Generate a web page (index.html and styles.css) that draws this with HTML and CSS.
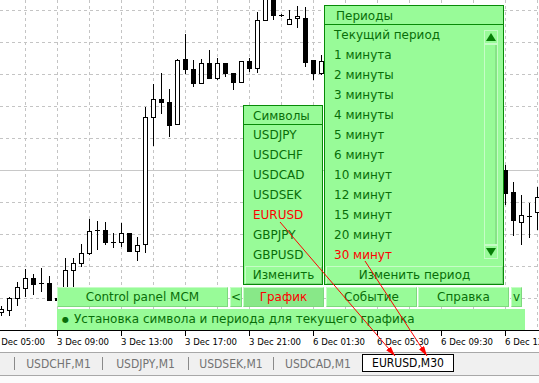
FILE: index.html
```html
<!DOCTYPE html>
<html lang="ru">
<head>
<meta charset="utf-8">
<title>MCM</title>
<link rel="stylesheet" href="styles.css">
</head>
<body>
<div class="screen">
  <div class="chart">
    <svg class="plot" width="539" height="331" viewBox="0 0 539 331">
      <path class="grid" d="M25.5 0V330M57.5 0V330M89.5 0V330M121.5 0V330M153.5 0V330M185.5 0V330M217.5 0V330M249.5 0V330M281.5 0V330M313.5 0V330M345.5 0V330M377.5 0V330M409.5 0V330M441.5 0V330M473.5 0V330M505.5 0V330M537.5 0V330M0 10.5H539M0 42.5H539M0 74.5H539M0 106.5H539M0 138.5H539M0 202.5H539M0 234.5H539M0 266.5H539M0 298.5H539"/>
      <path class="priceline" d="M0 170.5H539"/>
      <path class="wick" d="M1.5 306V316M9.5 297V316M17.5 282V306M25.5 269V297M33.5 274V295M41.5 268V292M49.5 276V301M57.5 292V305M65.5 258V305M73.5 258V290M81.5 244V267M89.5 219V255M97.5 221V250M105.5 222V245M113.5 233V248M121.5 223V247M129.5 233V251M137.5 237V261M145.5 107V253M153.5 84V146M161.5 73V114M169.5 89V137M177.5 59V125M185.5 34V74M193.5 60V87M201.5 59V83M209.5 50V78M217.5 58V80M225.5 63V77M233.5 73V90M241.5 61V82M249.5 58V72M257.5 12V73M265.5 -5V20M273.5 -5V20M281.5 14V17M289.5 10V25M297.5 6V28M305.5 7V67M313.5 60V80M321.5 55V75M505.5 165V205M513.5 182V236M521.5 195V245M529.5 203V238M537.5 187V230"/>
      <path class="wick" d="M39 283.5H44M95 230.5H100M111 242.5H116M279 15.5H284M527 216.5H532"/>
      <g class="bull">
        <rect x="-0.5" y="309.5" width="4" height="3"/>
        <rect x="7.5" y="298.5" width="4" height="12"/>
        <rect x="15.5" y="287.5" width="4" height="11"/>
        <rect x="23.5" y="278.5" width="4" height="10"/>
        <rect x="63.5" y="270.5" width="4" height="30"/>
        <rect x="71.5" y="263.5" width="4" height="7"/>
        <rect x="79.5" y="253.5" width="4" height="10"/>
        <rect x="87.5" y="231.5" width="4" height="22"/>
        <rect x="119.5" y="233.5" width="4" height="9"/>
        <rect x="135.5" y="245.5" width="4" height="6"/>
        <rect x="143.5" y="117.5" width="4" height="127"/>
        <rect x="151.5" y="99.5" width="4" height="18"/>
        <rect x="175.5" y="60.5" width="4" height="64"/>
        <rect x="199.5" y="63.5" width="4" height="20"/>
        <rect x="215.5" y="63.5" width="4" height="15"/>
        <rect x="239.5" y="61.5" width="4" height="21"/>
        <rect x="255.5" y="20.5" width="4" height="48"/>
        <rect x="263.5" y="-5.5" width="4" height="26"/>
        <rect x="287.5" y="19.5" width="4" height="5"/>
        <rect x="295.5" y="16.5" width="4" height="2"/>
        <rect x="319.5" y="61.5" width="4" height="12"/>
        <rect x="519.5" y="215.5" width="4" height="7"/>
        <rect x="535.5" y="197.5" width="4" height="15"/>
      </g>
      <g class="bear">
        <rect x="31.5" y="278.5" width="4" height="6"/>
        <rect x="47.5" y="283.5" width="4" height="17"/>
        <rect x="55.5" y="298.5" width="4" height="2"/>
        <rect x="103.5" y="230.5" width="4" height="12"/>
        <rect x="127.5" y="233.5" width="4" height="18"/>
        <rect x="159.5" y="99.5" width="4" height="3"/>
        <rect x="167.5" y="102.5" width="4" height="23"/>
        <rect x="183.5" y="59.5" width="4" height="10"/>
        <rect x="191.5" y="69.5" width="4" height="14"/>
        <rect x="207.5" y="63.5" width="4" height="15"/>
        <rect x="223.5" y="63.5" width="4" height="10"/>
        <rect x="231.5" y="73.5" width="4" height="9"/>
        <rect x="247.5" y="61.5" width="4" height="7"/>
        <rect x="271.5" y="-5.5" width="4" height="21"/>
        <rect x="303.5" y="18.5" width="4" height="44"/>
        <rect x="311.5" y="60.5" width="4" height="13"/>
        <rect x="503.5" y="170.5" width="4" height="23"/>
        <rect x="511.5" y="192.5" width="4" height="28"/>
      </g>
      <path class="axisline" d="M0 330.5H539"/>
    </svg>

    <div class="axis">
      <div class="tick-cell"><span class="tick"></span><span class="tick-label">3 Dec 05:00</span></div>
      <div class="tick-cell"><span class="tick"></span><span class="tick-label">3 Dec 09:00</span></div>
      <div class="tick-cell"><span class="tick"></span><span class="tick-label">3 Dec 13:00</span></div>
      <div class="tick-cell"><span class="tick"></span><span class="tick-label">3 Dec 17:00</span></div>
      <div class="tick-cell"><span class="tick"></span><span class="tick-label">3 Dec 21:00</span></div>
      <div class="tick-cell"><span class="tick"></span><span class="tick-label">6 Dec 01:30</span></div>
      <div class="tick-cell"><span class="tick"></span><span class="tick-label">6 Dec 05:30</span></div>
      <div class="tick-cell"><span class="tick"></span><span class="tick-label">6 Dec 09:30</span></div>
      <div class="tick-cell"><span class="tick"></span><span class="tick-label">6 Dec 13:30</span></div>
    </div>

    <div class="panel symbols">
      <div class="panel-head">Символы</div>
      <div class="list">
        <div class="rows">
          <div class="row">USDJPY</div>
          <div class="row">USDCHF</div>
          <div class="row">USDCAD</div>
          <div class="row">USDSEK</div>
          <div class="row red">EURUSD</div>
          <div class="row">GBPJPY</div>
          <div class="row">GBPUSD</div>
        </div>
      </div>
      <div class="btn panel-btn">Изменить</div>
    </div>

    <div class="panel periods">
      <div class="panel-head wide">Периоды</div>
      <div class="list">
        <div class="rows">
          <div class="row">Текущий период</div>
          <div class="row">1 минута</div>
          <div class="row">2 минуты</div>
          <div class="row">3 минуты</div>
          <div class="row">4 минуты</div>
          <div class="row">5 минут</div>
          <div class="row">6 минут</div>
          <div class="row">10 минут</div>
          <div class="row">12 минут</div>
          <div class="row">15 минут</div>
          <div class="row">20 минут</div>
          <div class="row red">30 минут</div>
        </div>
        <div class="scroll">
          <div class="sbtn"><svg width="10" height="8" viewBox="0 0 10 8"><polygon points="5,0 10,8 0,8"/></svg></div>
          <div class="track"></div>
          <div class="sbtn"><svg width="10" height="8" viewBox="0 0 10 8"><polygon points="0,0 10,0 5,8"/></svg></div>
        </div>
      </div>
      <div class="btn panel-btn">Изменить период</div>
    </div>

    <div class="controls">
      <div class="btn cbtn w-main">Control panel MCM</div>
      <div class="btn cbtn w-arrow">&lt;</div>
      <div class="btn cbtn w-chart active red">График</div>
      <div class="btn cbtn w-wide">Событие</div>
      <div class="btn cbtn w-wide">Справка</div>
      <div class="btn cbtn w-arrow2">v</div>
    </div>

    <div class="status"><span class="dot">●</span>Установка символа и периода для текущего графика</div>
  </div>

  <div class="tabs">
    <div class="tab t0"></div><span class="sep"></span>
    <div class="tab t1">USDCHF,M1</div><span class="sep"></span>
    <div class="tab t2">USDJPY,M1</div><span class="sep"></span>
    <div class="tab t3">USDSEK,M1</div><span class="sep"></span>
    <div class="tab t4">USDCAD,M1</div>
    <div class="tab current">EURUSD,M30</div>
  </div>
  <div class="foot"></div>

  <svg class="arrows" width="539" height="383" viewBox="0 0 539 383">
    <defs>
      <marker id="head" markerUnits="userSpaceOnUse" markerWidth="10" markerHeight="6" refX="10" refY="3" orient="auto">
        <path d="M0 0L10 3L0 6Z" fill="#ff0000"/>
      </marker>
    </defs>
    <line x1="280" y1="222" x2="395" y2="356" marker-end="url(#head)"/>
    <line x1="365" y1="261" x2="427" y2="356" marker-end="url(#head)"/>
  </svg>
</div>
</body>
</html>
```

FILE: styles.css
```css
* { box-sizing: border-box; }
html, body { margin: 0; padding: 0; }
body {
  width: 539px;
  height: 383px;
  overflow: hidden;
  background: #ffffff;
  font-family: "DejaVu Sans", sans-serif;
}
.screen {
  position: relative;
  width: 539px;
  height: 383px;
  display: flex;
  flex-direction: column;
}
.chart {
  position: relative;
  height: 352px;
  flex: none;
  background: #ffffff;
}
.plot { display: block; }
.grid {
  fill: none;
  stroke: #c4c4c4;
  stroke-width: 1;
  stroke-dasharray: 3 3;
}
.priceline { fill: none; stroke: #c8c8c8; stroke-width: 1; }
.wick { fill: none; stroke: #000; stroke-width: 1; }
.bull rect { fill: #fff; stroke: #000; stroke-width: 1; }
.bear rect { fill: #000; stroke: #000; stroke-width: 1; }
.axisline { stroke: #000; stroke-width: 1; }

.axis {
  display: flex;
  margin-left: -7px;
  height: 21px;
}
.tick-cell {
  width: 64px;
  flex: none;
  display: flex;
  flex-direction: column;
  align-items: flex-start;
}
.tick { display: block; width: 1px; height: 5px; background: #000; }
.tick-label {
  font-family: "DejaVu Sans Condensed", "DejaVu Sans", sans-serif;
  font-stretch: condensed;
  font-size: 9.5px;
  line-height: 11px;
  color: #000;
  white-space: nowrap;
}

.panel {
  position: absolute;
  background: #98fb98;
  border: 1px solid #078a07;
  display: flex;
  flex-direction: column;
  color: #086e08;
  font-size: 12px;
}
.symbols { left: 243px; top: 105px; width: 80px; height: 180px; }
.periods { left: 324px; top: 5px; width: 180px; height: 280px; }
.panel-head {
  height: 19px;
  border-bottom: 1px solid #078a07;
  padding: 1px 0 0 9px;
  line-height: 18px;
  white-space: nowrap;
}
.panel-head.wide { padding-left: 11px; }
.list { display: flex; flex: none; }
.rows { flex: 1; }
.row {
  height: 20px;
  line-height: 20px;
  padding-left: 9px;
  white-space: nowrap;
}
.red { color: #ff0000; }

.scroll {
  width: 14px;
  margin: 5px 5px 6px 0;
  display: flex;
  flex-direction: column;
}
.sbtn {
  height: 14px;
  flex: none;
  border: 1px solid #c6fdc6;
  display: flex;
  align-items: center;
  justify-content: center;
}
.sbtn polygon { fill: #077f07; }
.track {
  flex: 1;
  border: 1px solid #c6fdc6;
  box-shadow: inset -2px 0 0 #86e486;
}

.btn {
  background: #98fb98;
  border: 1px solid;
  border-color: #c6fdc6 #7ed87e #7ed87e #c6fdc6;
  text-align: center;
  white-space: nowrap;
  color: #086e08;
  font-size: 12px;
}
.panel-btn {
  height: 18px;
  margin: 1px 0 0 1px;
  line-height: 16px;
}

.controls {
  position: absolute;
  left: 57px;
  top: 287px;
  height: 20px;
  display: flex;
}
.cbtn { height: 20px; line-height: 18px; flex: none; }
.w-main { width: 171px; }
.w-arrow { width: 12px; margin-left: 2px; }
.w-chart { width: 81px; margin-left: 1px; }
.w-wide { width: 91px; margin-left: 2px; }
.w-wide + .w-wide { margin-left: 1px; }
.w-arrow2 { width: 11px; margin-left: 2px; }
.cbtn.active { background: #88e888; color: #ff0000; }

.status {
  position: absolute;
  left: 57px;
  top: 309px;
  width: 468px;
  height: 21px;
  background: #98fb98;
  color: #086e08;
  font-size: 12px;
  line-height: 21px;
  padding-left: 5px;
  white-space: nowrap;
}
.dot { font-size: 8px; margin-right: 5px; vertical-align: 1px; }

.tabs {
  height: 24px;
  flex: none;
  background: #f0f0f0;
  border-top: 1px solid #a8a8a8;
  border-bottom: 1px solid #a8a8a8;
  display: flex;
  align-items: flex-start;
  font-family: "DejaVu Sans Condensed", "DejaVu Sans", sans-serif;
  font-stretch: condensed;
  font-size: 12px;
  color: #737373;
}
.tab {
  height: 22px;
  line-height: 22px;
  text-align: center;
  white-space: nowrap;
  flex: none;
}
.t0 { width: 14px; }
.t1 { width: 87px; }
.t2 { width: 85px; }
.t3 { width: 84px; }
.t4 { width: 88px; }
.sep {
  width: 1px;
  height: 13px;
  margin-top: 4px;
  background: #8a8a8a;
  flex: none;
}
.current {
  width: 92px;
  height: 18px;
  margin-top: 1px;
  line-height: 16px;
  background: #ffffff;
  border: 1px solid #000;
  color: #000;
}
.foot { flex: 1; background: #fbfbfb; }

.arrows {
  position: absolute;
  left: 0;
  top: 0;
  pointer-events: none;
}
.arrows line { stroke: #ff0000; stroke-width: 1; }
```
